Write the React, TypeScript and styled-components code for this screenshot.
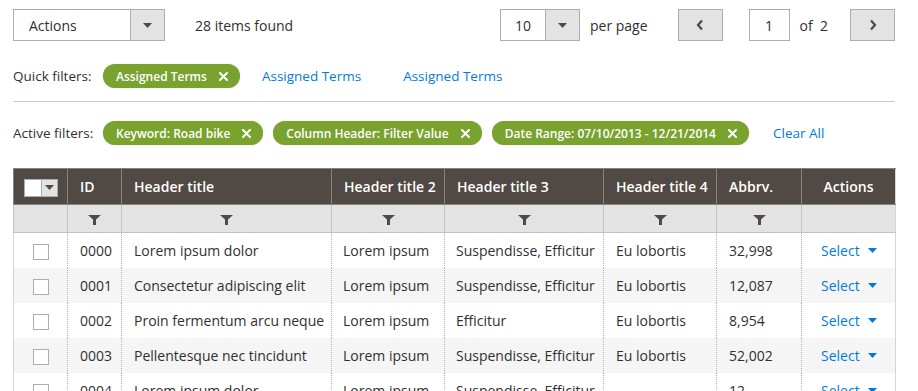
import React from 'react';
import styled, { createGlobalStyle } from 'styled-components';

const GlobalStyle = createGlobalStyle`
  html, body {
    margin: 0;
    padding: 0;
    background: #ffffff;
  }
  body {
    font-family: "Open Sans", "Liberation Sans", sans-serif;
    font-size: 14px;
    color: #303030;
  }
`;

const DARK = '#514943';
const GREEN = '#79a22e';
const BLUE = '#007bdb';

type Row = {
  id: string;
  title: string;
  t2: string;
  t3: string;
  t4: string;
  abbr: string;
};

const rows: Row[] = [
  { id: '0000', title: 'Lorem ipsum dolor', t2: 'Lorem ipsum', t3: 'Suspendisse, Efficitur', t4: 'Eu lobortis', abbr: '32,998' },
  { id: '0001', title: 'Consectetur adipiscing elit', t2: 'Lorem ipsum', t3: 'Suspendisse, Efficitur', t4: 'Eu lobortis', abbr: '12,087' },
  { id: '0002', title: 'Proin fermentum arcu neque', t2: 'Lorem ipsum', t3: 'Efficitur', t4: 'Eu lobortis', abbr: '8,954' },
  { id: '0003', title: 'Pellentesque nec tincidunt', t2: 'Lorem ipsum', t3: 'Suspendisse, Efficitur', t4: 'Eu lobortis', abbr: '52,002' },
  { id: '0004', title: 'Lorem ipsum dolor', t2: 'Lorem ipsum', t3: 'Suspendisse, Efficitur', t4: '', abbr: '12' },
];

const columns = [
  { key: 'check', title: '', width: 54 },
  { key: 'id', title: 'ID', width: 54 },
  { key: 'title', title: 'Header title', width: 210 },
  { key: 't2', title: 'Header title 2', width: 113 },
  { key: 't3', title: 'Header title 3', width: 159 },
  { key: 't4', title: 'Header title 4', width: 113 },
  { key: 'abbr', title: 'Abbrv.', width: 85 },
  { key: 'actions', title: 'Actions', width: 94 },
];

const Caret = ({ color = DARK }: { color?: string }) => (
  <svg width="9" height="5" viewBox="0 0 9 5">
    <polygon points="0,0 9,0 4.5,5" fill={color} />
  </svg>
);

const Chevron = ({ dir }: { dir: 'left' | 'right' }) => (
  <svg width="8" height="12" viewBox="0 0 8 12">
    <polyline
      points={dir === 'left' ? '6,1.5 2,6 6,10.5' : '2,1.5 6,6 2,10.5'}
      fill="none"
      stroke={DARK}
      strokeWidth="2.2"
    />
  </svg>
);

const CloseX = () => (
  <svg width="9" height="9" viewBox="0 0 9 9">
    <path d="M1 1 L8 8 M8 1 L1 8" stroke="#fff" strokeWidth="2" strokeLinecap="round" />
  </svg>
);

const Funnel = () => (
  <svg width="13" height="10" viewBox="0 0 13 10">
    <polygon points="0,0 13,0 8,4.5 8,10 5,10 5,4.5" fill={DARK} />
  </svg>
);

function Chip({ label }: { label: string }) {
  return (
    <ChipBox>
      <span>{label}</span>
      <CloseX />
    </ChipBox>
  );
}

export default function App() {
  return (
    <Page>
      <GlobalStyle />
      <TopBar>
        <Group>
          <SelectBox $width={152}>
            <SelectValue $align="left">Actions</SelectValue>
            <SelectButton><Caret /></SelectButton>
          </SelectBox>
          <Count>28 items found</Count>
        </Group>
        <Group>
          <SelectBox $width={80}>
            <SelectValue $align="center">10</SelectValue>
            <SelectButton><Caret /></SelectButton>
          </SelectBox>
          <PerPage>per page</PerPage>
          <PageButton><Chevron dir="left" /></PageButton>
          <PageInput>1</PageInput>
          <OfText>of&nbsp; 2</OfText>
          <PageButton><Chevron dir="right" /></PageButton>
        </Group>
      </TopBar>

      <FilterRow>
        <FilterLabel>Quick filters:</FilterLabel>
        <Chip label="Assigned Terms" />
        <QuickLink>Assigned Terms</QuickLink>
        <QuickLink>Assigned Terms</QuickLink>
      </FilterRow>

      <Divider />

      <FilterRow $active>
        <FilterLabel>Active filters:</FilterLabel>
        <Chip label="Keyword: Road bike" />
        <Chip label="Column Header: Filter Value" />
        <Chip label="Date Range: 07/10/2013 - 12/21/2014" />
        <ClearAll>Clear All</ClearAll>
      </FilterRow>

      <Grid>
        <colgroup>
          {columns.map((c) => (
            <col key={c.key} style={{ width: c.width }} />
          ))}
        </colgroup>
        <thead>
          <tr>
            {columns.map((c) => (
              <HeadCell key={c.key} $center={c.key === 'actions' || c.key === 'check'}>
                {c.key === 'check' ? (
                  <MassSelect>
                    <MassBox />
                    <MassToggle><Caret /></MassToggle>
                  </MassSelect>
                ) : (
                  c.title
                )}
              </HeadCell>
            ))}
          </tr>
          <tr>
            {columns.map((c) => (
              <FilterCell key={c.key}>
                {c.key !== 'check' && c.key !== 'actions' && <Funnel />}
              </FilterCell>
            ))}
          </tr>
        </thead>
        <tbody>
          {rows.map((r, i) => (
            <BodyRow key={r.id} $striped={i % 2 === 1}>
              <Cell $center>
                <Checkbox />
              </Cell>
              <Cell>{r.id}</Cell>
              <Cell>{r.title}</Cell>
              <Cell $tight>{r.t2}</Cell>
              <Cell $tight>{r.t3}</Cell>
              <Cell>{r.t4}</Cell>
              <Cell>{r.abbr}</Cell>
              <Cell>
                <SelectLink>
                  Select <Caret color={BLUE} />
                </SelectLink>
              </Cell>
            </BodyRow>
          ))}
        </tbody>
      </Grid>
    </Page>
  );
}

const Page = styled.div`
  padding: 9px 23px 0 13px;
  overflow: hidden;
  height: 382px;
`;

const TopBar = styled.div`
  display: flex;
  justify-content: space-between;
  align-items: center;
  height: 32px;
`;

const Group = styled.div`
  display: flex;
  align-items: center;
`;

const SelectBox = styled.div<{ $width: number }>`
  display: flex;
  width: ${(p) => p.$width}px;
  height: 32px;
  box-sizing: border-box;
  border: 1px solid #adadad;
  background: #fff;
`;

const SelectValue = styled.div<{ $align: 'left' | 'center' }>`
  flex: 1;
  display: flex;
  align-items: center;
  justify-content: ${(p) => (p.$align === 'center' ? 'center' : 'flex-start')};
  padding-left: ${(p) => (p.$align === 'center' ? '0' : '15px')};
  font-size: 14px;
  color: #303030;
`;

const SelectButton = styled.div`
  width: 33px;
  border-left: 1px solid #adadad;
  background: #e3e3e3;
  display: flex;
  align-items: center;
  justify-content: center;
`;

const Count = styled.span`
  margin-left: 30px;
  font-size: 14px;
  color: #303030;
`;

const PerPage = styled.span`
  margin-left: 10px;
  margin-right: 30px;
  font-size: 14px;
`;

const PageButton = styled.div`
  width: 45px;
  height: 32px;
  box-sizing: border-box;
  border: 1px solid #adadad;
  background: #e3e3e3;
  display: flex;
  align-items: center;
  justify-content: center;
`;

const PageInput = styled.div`
  margin-left: 26px;
  width: 41px;
  height: 32px;
  box-sizing: border-box;
  border: 1px solid #adadad;
  display: flex;
  align-items: center;
  justify-content: center;
  font-size: 14px;
`;

const OfText = styled.span`
  margin: 0 22px 0 10px;
  font-size: 14px;
`;

const FilterRow = styled.div<{ $active?: boolean }>`
  display: flex;
  align-items: center;
  gap: 10px;
  height: 24px;
  margin-top: ${(p) => (p.$active ? '19px' : '23px')};
  margin-bottom: ${(p) => (p.$active ? '23px' : '13px')};
`;

const FilterLabel = styled.span`
  width: 80px;
  font-size: 13.5px;
  color: #303030;
  white-space: nowrap;
`;

const ChipBox = styled.div`
  display: inline-flex;
  align-items: center;
  gap: 12px;
  height: 24px;
  box-sizing: border-box;
  padding: 0 12px 0 13px;
  border-radius: 12px;
  background: ${GREEN};
  color: #fff;
  font-size: 12px;
  font-weight: 600;
  white-space: nowrap;
  box-shadow: 0 0 1px rgba(0, 0, 0, 0.3);
`;

const QuickLink = styled.span`
  color: ${BLUE};
  font-size: 13.5px;
  margin-left: 12px;
  margin-right: 20px;
`;

const ClearAll = styled.span`
  color: ${BLUE};
  font-size: 13.5px;
  margin-left: 14px;
`;

const Divider = styled.div`
  height: 1px;
  background: #cccccc;
`;

const Grid = styled.table`
  width: 882px;
  table-layout: fixed;
  border-collapse: collapse;
  font-size: 14px;
  border-left: 1px solid #d6d6d6;
  border-right: 1px solid #d6d6d6;
`;

const HeadCell = styled.th<{ $center?: boolean }>`
  height: 36px;
  box-sizing: border-box;
  padding: 0 0 0 12px;
  background: ${DARK};
  color: #fff;
  font-weight: 600;
  text-align: ${(p) => (p.$center ? 'center' : 'left')};
  ${(p) => (p.$center ? 'padding-left: 0;' : '')}
  border-left: 1px solid #8a837f;
  border-top: 1px solid #8a837f;
  border-bottom: 1px solid #8a837f;
  white-space: nowrap;
`;

const MassSelect = styled.div`
  display: inline-flex;
  height: 16px;
  border: 1px solid #adadad;
  vertical-align: middle;
`;

const MassBox = styled.div`
  width: 16px;
  background: #fff;
`;

const MassToggle = styled.div`
  width: 15px;
  background: #e3e3e3;
  border-left: 1px solid #adadad;
  display: flex;
  align-items: center;
  justify-content: center;
`;

const FilterCell = styled.th`
  height: 28px;
  box-sizing: border-box;
  background: #e3e3e3;
  border-left: 1px solid #c4c4c4;
  border-bottom: 1px solid #c4c4c4;
  text-align: center;
  padding: 3px 0 0;
  line-height: 0;
`;

const BodyRow = styled.tr<{ $striped: boolean }>`
  background: ${(p) => (p.$striped ? '#f5f5f5' : '#ffffff')};
`;

const Cell = styled.td<{ $center?: boolean; $tight?: boolean }>`
  height: 35px;
  box-sizing: border-box;
  padding: 0 0 0 ${(p) => (p.$tight ? '11px' : '12px')};
  text-align: ${(p) => (p.$center ? 'center' : 'left')};
  ${(p) => (p.$center ? 'padding-left: 0;' : '')}
  border-left: 1px dotted #b0b0b0;
  white-space: nowrap;
  overflow: hidden;
  color: #303030;
  &:first-child {
    border-left: none;
  }
  &:last-child {
    padding-left: 19px;
  }
`;

const Checkbox = styled.div`
  display: inline-block;
  width: 16px;
  height: 16px;
  box-sizing: border-box;
  border: 1px solid #adadad;
  background: #fff;
  vertical-align: middle;
`;

const SelectLink = styled.span`
  display: inline-flex;
  align-items: center;
  gap: 8px;
  color: ${BLUE};
`;
